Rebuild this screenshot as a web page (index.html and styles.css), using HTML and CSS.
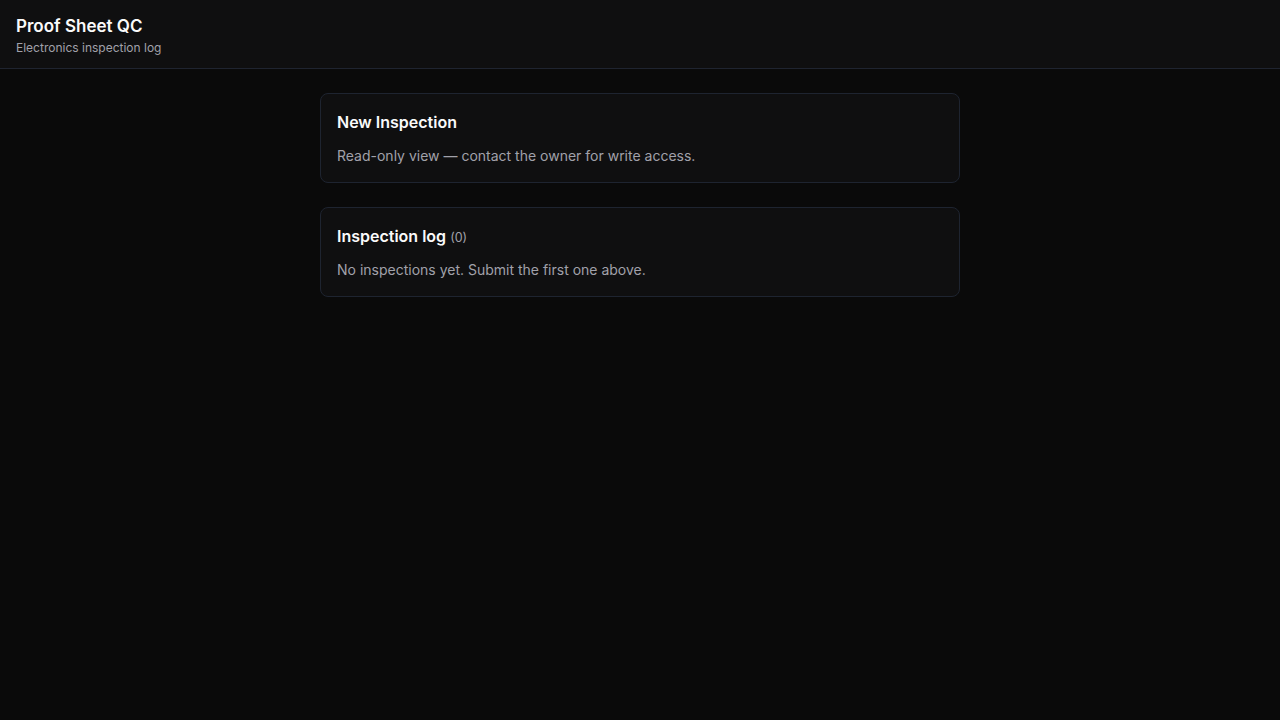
FILE: index.html
```html
<!DOCTYPE html>
<html lang="en">
<head>
<meta charset="utf-8">
<title>Proof Sheet QC</title>
<link rel="stylesheet" href="styles.css">
</head>
<body>
<header class="topbar">
  <h1 class="app-title">Proof Sheet QC</h1>
  <p class="app-sub">Electronics inspection log</p>
</header>
<main class="content">
  <section class="card">
    <h2 class="card-title">New Inspection</h2>
    <p class="card-text">Read-only view — contact the owner for write access.</p>
  </section>
  <section class="card">
    <h2 class="card-title">Inspection log <span class="count">(0)</span></h2>
    <p class="card-text">No inspections yet. Submit the first one above.</p>
  </section>
</main>
</body>
</html>
```

FILE: styles.css
```css
* { box-sizing: border-box; }
html, body { margin: 0; padding: 0; }
body {
  background: #0a0a0a;
  color: #f4f4f5;
  font-family: Inter, "Noto Sans", sans-serif;
  min-height: 100vh;
}
.topbar {
  background: #0f0f10;
  border-bottom: 1px solid #1f2430;
  padding: 12px 16px;
  height: 69px;
}
.app-title {
  margin: 0;
  font-size: 17px;
  line-height: 28px;
  font-weight: 600;
  color: #fafafa;
}
.app-sub {
  margin: 0;
  font-size: 12px;
  line-height: 16px;
  color: #a1a1aa;
}
.content {
  width: 640px;
  margin: 0 auto;
  padding-top: 24px;
  display: flex;
  flex-direction: column;
  gap: 24px;
}
.card {
  background: #0f0f10;
  border: 1px solid #1e2430;
  border-radius: 8px;
  padding: 16px;
}
.card-title {
  margin: 0;
  font-size: 16px;
  line-height: 24px;
  height: 24px;
  font-weight: 600;
  color: #fafafa;
}
.count {
  font-size: 12.5px;
  line-height: 1;
  font-weight: 400;
  color: #a1a1aa;
}
.card-text {
  margin: 12px 0 0;
  font-size: 14px;
  line-height: 20px;
  color: #a1a1aa;
}
```
